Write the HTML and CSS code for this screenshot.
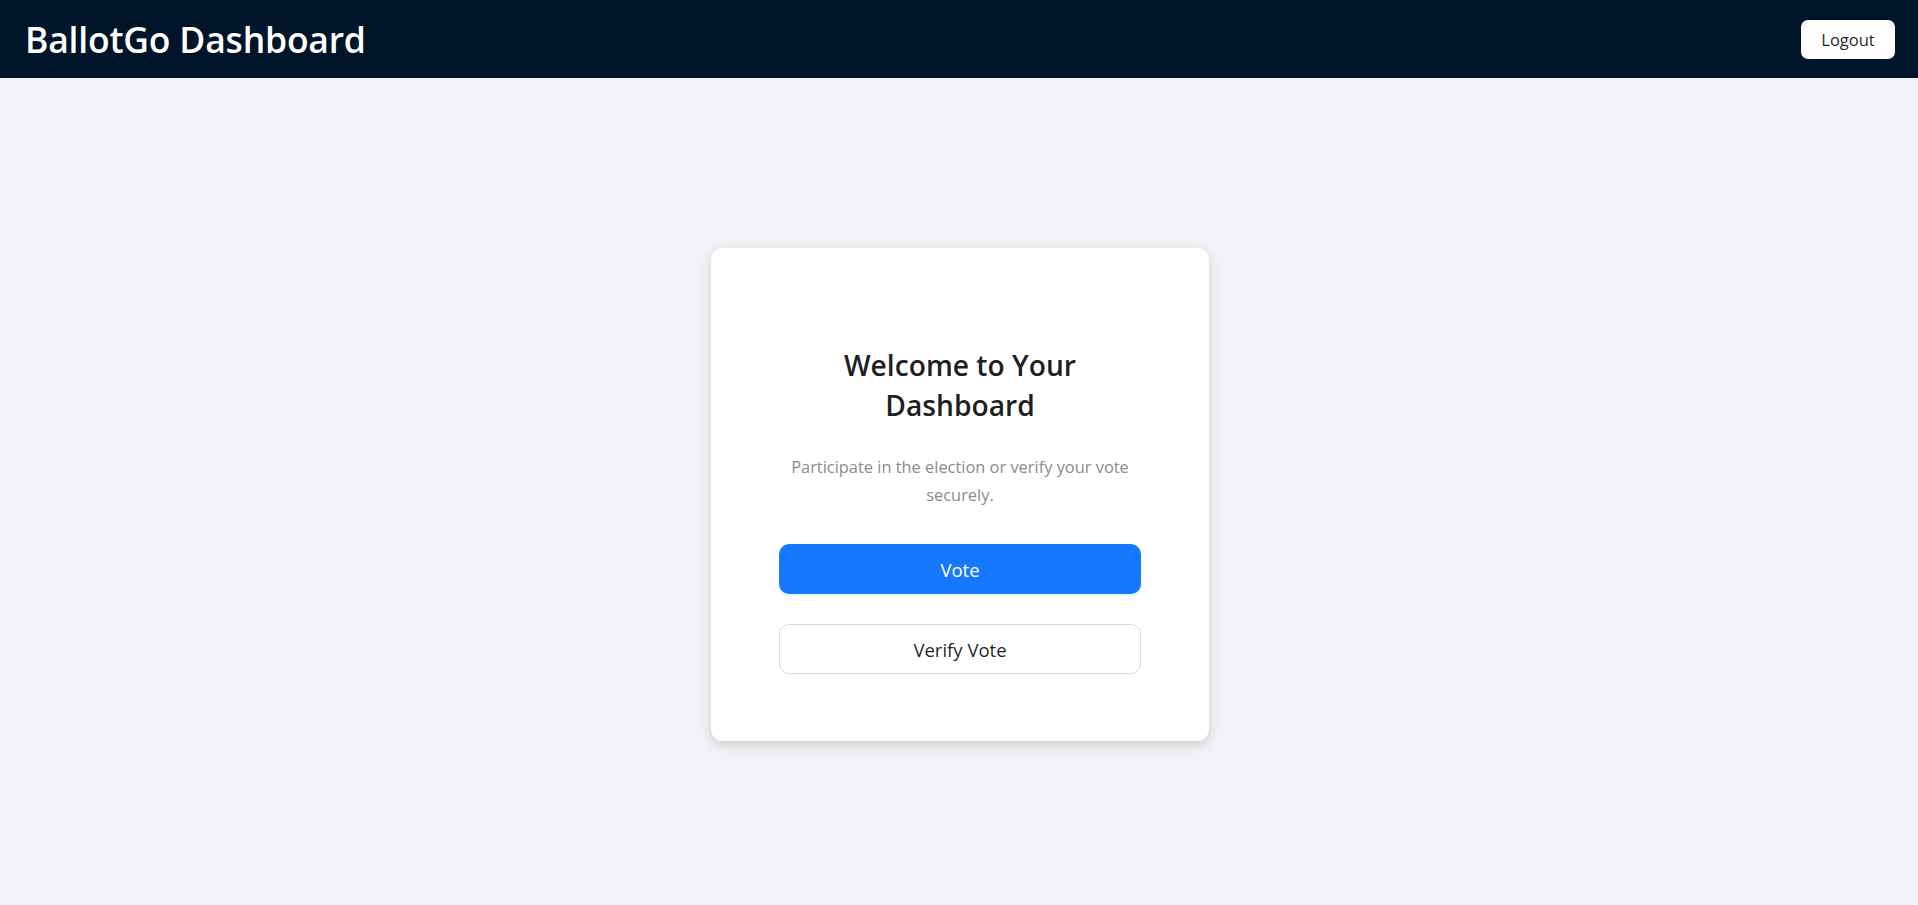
FILE: index.html
```html
<!DOCTYPE html>
<html lang="en">
<head>
<meta charset="utf-8">
<title>BallotGo Dashboard</title>
<link rel="stylesheet" href="styles.css">
</head>
<body>
<header class="topbar">
  <h1 class="brand">BallotGo Dashboard</h1>
  <button class="btn-logout" type="button">Logout</button>
</header>
<main class="main">
  <section class="card">
    <h2 class="card-title">Welcome to Your Dashboard</h2>
    <p class="card-text">Participate in the election or verify your vote securely.</p>
    <div class="actions">
      <button class="btn btn-primary" type="button">Vote</button>
      <button class="btn btn-default" type="button">Verify Vote</button>
    </div>
  </section>
</main>
</body>
</html>
```
FILE: styles.css
```css
* { box-sizing: border-box; }
html, body { margin: 0; padding: 0; }
body {
  background: #f0f2f5;
  font-family: "Open Sans", "Noto Sans", sans-serif;
  min-height: 100vh;
}
.topbar {
  height: 78px;
  background: #001529;
  display: flex;
  align-items: center;
  justify-content: space-between;
  padding: 0 23px 0 25px;
}
.brand {
  margin: 0;
  color: #fff;
  font-size: 35.5px;
  font-weight: 600;
  letter-spacing: -0.2px;
}
.btn-logout {
  width: 94px;
  height: 39px;
  border: none;
  border-radius: 7px;
  background: #fff;
  color: rgba(0,0,0,0.88);
  font-family: inherit;
  font-size: 16.5px;
  cursor: pointer;
}
.main {
  display: flex;
  justify-content: center;
  padding: 170px 0 0 2px;
}
.card {
  width: 498px;
  background: #fff;
  border-radius: 12px;
  box-shadow: 0 4px 12px rgba(0,0,0,0.15);
  padding: 97px 68px 67px;
  text-align: center;
}
.card-title {
  margin: 0 0 28px;
  font-size: 28.2px;
  line-height: 40px;
  font-weight: 600;
  color: #1f1f1f;
}
.card-text {
  margin: 0 0 36px;
  font-size: 16.4px;
  line-height: 27.5px;
  color: #8c8c8c;
}
.actions {
  display: flex;
  flex-direction: column;
  gap: 30px;
}
.btn {
  width: 100%;
  height: 50px;
  border-radius: 10px;
  font-family: inherit;
  font-size: 18.5px;
  cursor: pointer;
}
.btn-primary {
  background: #1677ff;
  color: #fff;
  border: none;
  box-shadow: 0 2px 0 rgba(5,145,255,0.1);
}
.btn-default {
  background: #fff;
  color: rgba(0,0,0,0.88);
  border: 1px solid #d9d9d9;
  box-shadow: 0 2px 0 rgba(0,0,0,0.02);
}
```
